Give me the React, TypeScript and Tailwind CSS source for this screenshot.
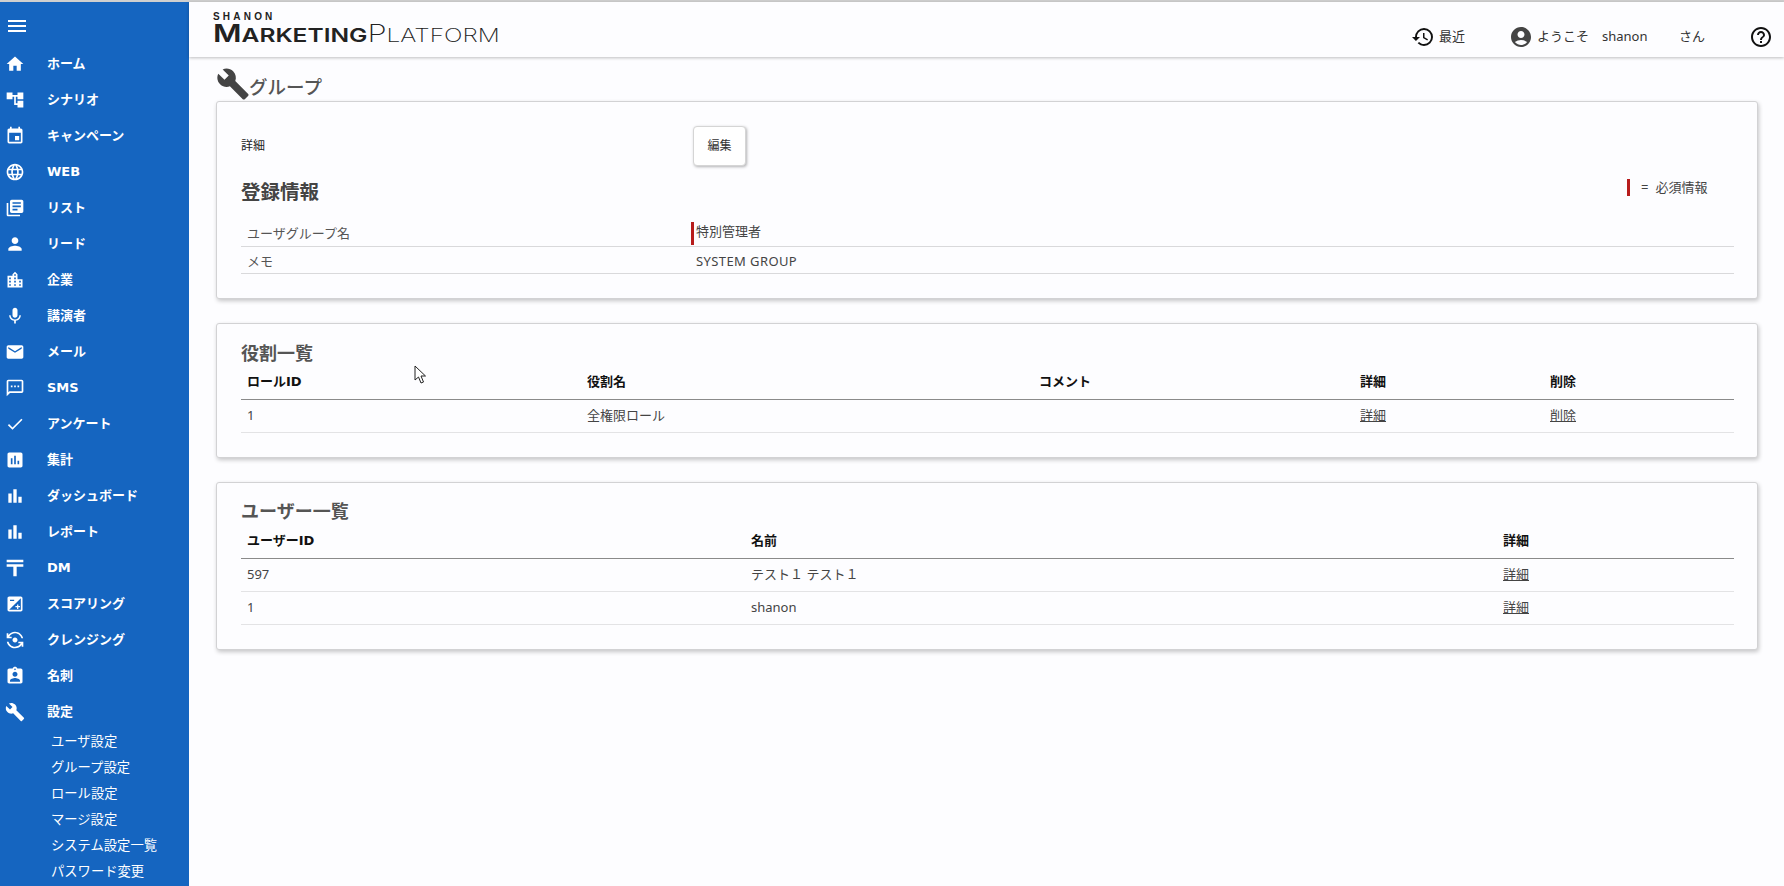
import type { ReactNode } from 'react';
import {
  MdAccountCircle,
  MdAccountTree,
  MdAssessment,
  MdAssignmentInd,
  MdBarChart,
  MdBuild,
  MdCheck,
  MdEmail,
  MdEvent,
  MdExposure,
  MdFlipCameraAndroid,
  MdHelpOutline,
  MdHistory,
  MdHome,
  MdLanguage,
  MdLibraryBooks,
  MdLocationCity,
  MdMenu,
  MdMic,
  MdOutlineSms,
  MdPerson,
} from 'react-icons/md';

// 郵便マーク
function PostIcon() {
  return (
    <svg viewBox="0 0 24 24" width={20} height={20} fill="currentColor">
      <path d="M2 2h20v3H2zM2 7.5h20v3H2zM10 10.5h4V22h-4z" />
    </svg>
  );
}

const menuItems: { label: string; icon: ReactNode }[] = [
  { label: 'ホーム', icon: <MdHome size={20} /> },
  { label: 'シナリオ', icon: <MdAccountTree size={20} /> },
  { label: 'キャンペーン', icon: <MdEvent size={20} /> },
  { label: 'WEB', icon: <MdLanguage size={20} /> },
  { label: 'リスト', icon: <MdLibraryBooks size={20} /> },
  { label: 'リード', icon: <MdPerson size={20} /> },
  { label: '企業', icon: <MdLocationCity size={20} /> },
  { label: '講演者', icon: <MdMic size={20} /> },
  { label: 'メール', icon: <MdEmail size={20} /> },
  { label: 'SMS', icon: <MdOutlineSms size={20} /> },
  { label: 'アンケート', icon: <MdCheck size={20} /> },
  { label: '集計', icon: <MdAssessment size={20} /> },
  { label: 'ダッシュボード', icon: <MdBarChart size={20} /> },
  { label: 'レポート', icon: <MdBarChart size={20} /> },
  { label: 'DM', icon: <PostIcon /> },
  { label: 'スコアリング', icon: <MdExposure size={20} /> },
  { label: 'クレンジング', icon: <MdFlipCameraAndroid size={20} /> },
  { label: '名刺', icon: <MdAssignmentInd size={20} /> },
  { label: '設定', icon: <MdBuild size={20} /> },
];

const subItems = ['ユーザ設定', 'グループ設定', 'ロール設定', 'マージ設定', 'システム設定一覧', 'パスワード変更'];

function Sidebar() {
  return (
    <aside className="w-[189px] shrink-0 bg-[#1565c0] text-white">
      <div className="h-[44px] pl-[5px] pt-[12px]">
        <MdMenu size={24} />
      </div>
      {menuItems.map((item) => (
        <div key={item.label} className="flex h-9 items-center pl-[5px]">
          <span className="w-[42px] shrink-0">{item.icon}</span>
          <span className="font-['DejaVu_Sans','Noto_Sans_CJK_JP',sans-serif] text-[13px] font-bold">{item.label}</span>
        </div>
      ))}
      <div className="mt-[-1px]">
        {subItems.map((label) => (
          <div key={label} className="flex h-[26px] items-center pl-[51px] text-[13.3px]">
            {label}
          </div>
        ))}
      </div>
    </aside>
  );
}

function Logo() {
  return (
    <div className="w-[285px] pt-[9px] text-[#222]">
      <div className="text-[10px] leading-[12px] font-bold tracking-[3.2px] font-['Liberation_Sans',sans-serif]">SHANON</div>
      <div className="mt-[1px] origin-left scale-x-[1.29] whitespace-nowrap leading-[20px] font-['Inter',sans-serif]">
        <span className="text-[24px] font-semibold">M</span>
        <span className="text-[19px] font-semibold">ARKETING</span>
        <span className="text-[24px] font-extralight">P</span>
        <span className="text-[19px] font-extralight">LATFORM</span>
      </div>
    </div>
  );
}

function Header() {
  return (
    <header className="relative flex h-[55px] items-start justify-between bg-[#fdfdff] pl-[24px] shadow-[0_1px_3px_rgba(0,0,0,0.25)]">
      <Logo />
      <div className="flex items-center pt-[23px] text-[13px] text-[#333]">
        <MdHistory size={24} className="text-[#111]" />
        <span className="ml-[4px] w-[44px]">最近</span>
        <span className="w-[26px]" />
        <MdAccountCircle size={24} className="text-[#444]" />
        <span className="ml-[4px] w-[65px]">ようこそ</span>
        <span className="w-[77px]">shanon</span>
        <span className="w-[71px]">さん</span>
        <MdHelpOutline size={24} className="mr-[11px] ml-[-1px] text-[#111]" />
      </div>
    </header>
  );
}

function Card({ className, children }: { className: string; children: ReactNode }) {
  return (
    <section
      className={`rounded-[3px] border border-[#d2d2d4] bg-[#fdfdff] px-[24px] shadow-[1px_2px_4px_rgba(0,0,0,0.22)] ${className}`}
    >
      {children}
    </section>
  );
}

function DataTable({ columns, widths, rows }: { columns: string[]; widths: string[]; rows: ReactNode[][] }) {
  return (
    <table className="w-[1493px] table-fixed border-collapse text-[13px] text-[#444]">
      <colgroup>
        {widths.map((w, i) => (
          <col key={i} className={w} />
        ))}
      </colgroup>
      <thead>
        <tr className="h-[34px] border-b border-[#8a8a8a]">
          {columns.map((c) => (
            <th key={c} className="px-[6px] text-left font-['DejaVu_Sans','Noto_Sans_CJK_JP',sans-serif] font-bold text-[#111]">
              {c}
            </th>
          ))}
        </tr>
      </thead>
      <tbody>
        {rows.map((row, i) => (
          <tr key={i} className="h-[33px] border-b border-[#e3e3e5]">
            {row.map((cell, j) => (
              <td key={j} className="px-[6px]">
                {cell}
              </td>
            ))}
          </tr>
        ))}
      </tbody>
    </table>
  );
}

function Detail({ label }: { label: string }) {
  return <a className="underline">{label}</a>;
}

export default function App() {
  return (
    <div className="relative h-[886px] w-[1784px] overflow-hidden bg-[#fdfdff] font-['Noto_Sans','Noto_Sans_CJK_JP',sans-serif]">
      <div className="h-[2px] bg-[#cfcfcf]" />
      <div className="flex h-[884px]">
        <Sidebar />
        <div className="min-w-0 flex-1">
          <Header />
          <main className="pl-[27px]">
            <div className="flex h-[44px] items-end">
              <MdBuild size={34} className="text-[#444]" />
              <h1 className="mb-[2px] ml-[-1px] text-[18.5px] leading-[24px] font-medium text-[#555]">グループ</h1>
            </div>

            <Card className="h-[198px] w-[1542px]">
              <div className="flex h-[64px] items-start">
                <div className="w-[452px] pt-[35px] text-[12px] leading-[18px] text-[#222]">詳細</div>
                <button className="mt-[24px] h-[40px] w-[53px] rounded-[4px] border border-[#d5d5d5] bg-white text-[12px] text-[#333] shadow-[1px_1px_3px_rgba(0,0,0,0.3)]">
                  編集
                </button>
              </div>
              <div className="flex items-start justify-between">
                <h2 className="mt-[13px] text-[19.5px] leading-[26px] font-bold text-[#444]">登録情報</h2>
                <div className="mt-[12px] mr-[25px] flex w-[81px] items-center whitespace-nowrap text-[13px] text-[#444]">
                  <span className="h-[17px] w-[3px] shrink-0 bg-[#b71c1c]" />
                  <span className="ml-[11px]">=</span>
                  <span className="ml-[7px]">必須情報</span>
                </div>
              </div>
              <div className="mt-[16px] w-[1493px] text-[13px] text-[#444]">
                <div className="flex h-[26px] items-center border-b border-[#d9d9db]">
                  <span className="w-[450px] pl-[6px] pt-[1px] text-[#555]">ユーザグループ名</span>
                  <span className="h-[23px] w-[3px] bg-[#b71c1c]" />
                  <span className="ml-[2px] pb-[4px]">特別管理者</span>
                </div>
                <div className="flex h-[27px] items-center border-b border-[#d9d9db] pt-[4px]">
                  <span className="w-[455px] pl-[6px] text-[#555]">メモ</span>
                  <span className="tracking-[0.4px]">SYSTEM GROUP</span>
                </div>
              </div>
            </Card>

            <Card className="mt-[24px] h-[135px] w-[1542px]">
              <h2 className="pt-[17px] text-[18px] leading-[24px] font-bold text-[#555]">役割一覧</h2>
              <DataTable
                columns={['ロールID', '役割名', 'コメント', '詳細', '削除']}
                widths={['w-[340px]', 'w-[452px]', 'w-[321px]', 'w-[190px]', 'w-[190px]']}
                rows={[['1', '全権限ロール', '', <Detail label="詳細" />, <Detail label="削除" />]]}
              />
            </Card>

            <Card className="mt-[24px] h-[168px] w-[1542px]">
              <h2 className="mb-[1px] pt-[16px] text-[18px] leading-[24px] font-bold text-[#555]">ユーザー一覧</h2>
              <DataTable
                columns={['ユーザーID', '名前', '詳細']}
                widths={['w-[504px]', 'w-[752px]', 'w-[237px]']}
                rows={[
                  ['597', 'テスト１ テスト１', <Detail label="詳細" />],
                  ['1', 'shanon', <Detail label="詳細" />],
                ]}
              />
            </Card>
          </main>
        </div>
      </div>

      {/* マウスカーソル */}
      <svg className="absolute left-[414px] top-[365px]" width={13} height={19} viewBox="0 0 13 19">
        <path
          d="M1 1v14l3.5-3 2.500 6 2.500-1-2.500-6h4.500z"
          fill="#fff"
          stroke="#222"
          strokeWidth={1}
        />
      </svg>
    </div>
  );
}
